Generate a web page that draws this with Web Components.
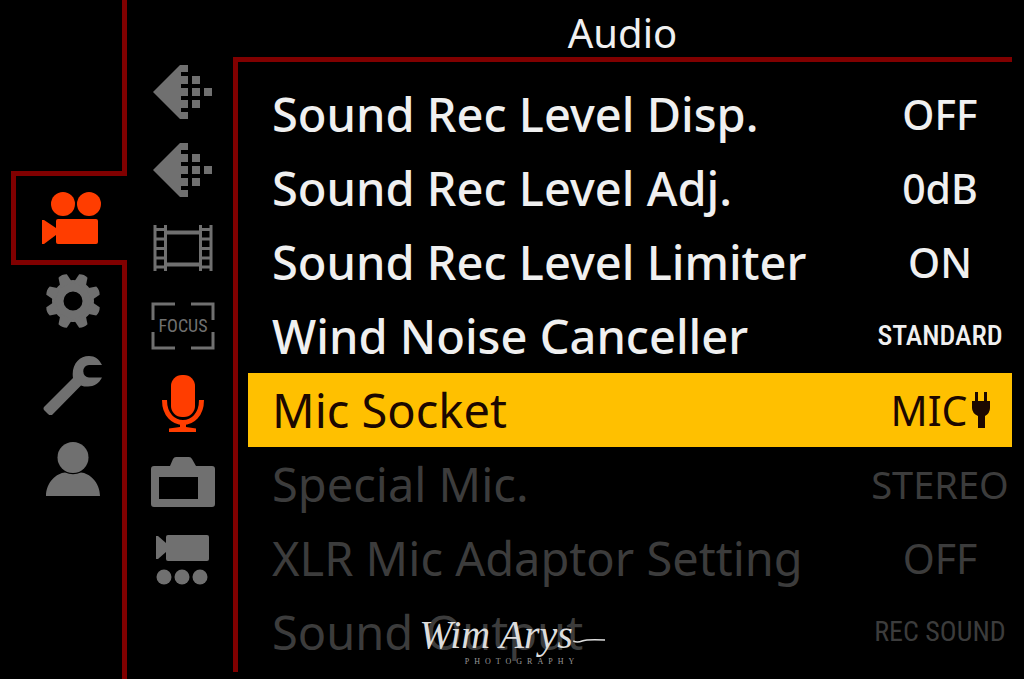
<!DOCTYPE html>
<html lang="en">
<head>
<meta charset="utf-8">
<title>Camera menu – Audio</title>
<meta name="viewport" content="width=device-width, initial-scale=1">
<style>
html { background: #000; }
body { margin: 0; background: #000; color: #f0f0f0; font-family: "Noto Sans", "Open Sans", sans-serif; --narrow: "Noto Sans Condensed", "Roboto Condensed", "Liberation Sans Narrow", "Noto Sans", sans-serif; }
</style>
</head>
<body>
<camera-menu></camera-menu>
<script>
const ICONS = {
  movie: [60, 54, '<circle cx="21" cy="13" r="12"/><circle cx="47" cy="13" r="12"/><rect x="14" y="28" width="42" height="25" rx="2"/><path d="M0 29h2l12 8v7L2 53H0z"/>'],
  gear: [56, 56, '<path fill-rule="evenodd" d="M28 7a21 21 0 1 0 0 42a21 21 0 1 0 0-42zM28 18.500a9.500 9.500 0 1 1 0 19a9.500 9.500 0 1 1 0-19z"/>' +
    [22.5, 67.5, 112.5, 157.5, 202.5, 247.5, 292.5, 337.5].map(a => `<path transform="rotate(${a} 28 28)" d="M21.500 11L23.500 1q4.500-2 9 0L34.500 11z"/>`).join('')],
  wrench: [60, 60, '<path d="M1 52L30 23C28 10 36 1 46 1c6 0 10 3 13 9H46a5.500 6 0 0 0 0 12.500h13c-3 6-8 9-14 9-3 0-5 0-7-1L9 60q-2 1-4-1l-4-4q-1-1.500 0-3z"/>'],
  person: [54, 54, '<circle cx="27" cy="15.500" r="15.500"/><path d="M0 54C0 40 11 31 19 30.500q8 3.500 16 0C43 31 54 40 54 54z"/>'],
  quality: [60, 56, '<path d="M0 28L27 1h8v7h-7v4h7v8h-7v4h7v8h-7v4h7v8h-7v4h7v7h-8z"/><path d="M39 12h8v8h-8zM39 24h8v8h-8zM39 36h8v8h-8zM51 24h8v8h-8z"/>'],
  film: [60, 46, '<path fill="none" stroke="currentColor" stroke-width="3" d="M2 0v46M12.500 0v46M47.500 0v46M58 0v46M2 4.500h11M2 14h11M2 23.500h11M2 33h11M2 42h11M47 4.500h11M47 14h11M47 23.500h11M47 33h11M47 42h11"/><path fill="none" stroke="currentColor" stroke-width="4" d="M13 7.500h34M13 39.500h34"/>'],
  mic: [44, 58, '<rect x="10" y="0" width="24" height="42" rx="11"/><path fill="none" stroke="currentColor" stroke-width="5" d="M3.500 25c0 30 37 30 37 0"/><path d="M19 46h6v6l10 1.500V57H8v-3.500l11-1.500z"/>'],
  camera: [64, 50, '<path fill-rule="evenodd" d="M3 9H19L22 2q1-2 3-2H38q2 0 3 2L45 9H61q3 0 3 3V47q0 3-3 3H3q-3 0-3-3V12q0-3 3-3zM8 20V42H47V20z"/>'],
  clips: [54, 50, '<rect x="10" y="0" width="43" height="26" rx="2"/><path d="M0 1h2l8 7v9l-8 7H0z"/><circle cx="8" cy="42" r="7.500"/><circle cx="26" cy="42" r="7.500"/><circle cx="44" cy="42" r="7.500"/>'],
  plug: [18, 36, '<path d="M3 0h3v9h6V0h3v9h3v7q0 5-5 8v12H6V24q-6-3-6-8V9h3z"/>']
};

class MenuIcon extends HTMLElement {
  constructor() {
    super();
    const [w, h, body] = ICONS[this.getAttribute('name')];
    this.attachShadow({ mode: 'open' }).innerHTML = `
      <style>:host{display:inline-block;line-height:0}svg{display:block;fill:currentColor}</style>
      <svg width="${w}" height="${h}" viewBox="0 0 ${w} ${h}" aria-hidden="true">${body}</svg>`;
  }
}
customElements.define('menu-icon', MenuIcon);

class FocusFrame extends HTMLElement {
  constructor() {
    super();
    this.attachShadow({ mode: 'open' }).innerHTML = `
      <style>
        :host{display:grid;width:64px;height:48px}
        svg,span{grid-area:1/1}
        span{place-self:center;font:18px/24px var(--narrow)}
      </style>
      <svg width="64" height="48" viewBox="0 0 64 48" fill="none" stroke="currentColor" stroke-width="3" aria-hidden="true">
        <path d="M24 2H2V18M40 2H62V18M2 30V46H24M62 30V46H40"/></svg>
      <span><slot></slot></span>`;
  }
}
customElements.define('focus-frame', FocusFrame);

class MenuTab extends HTMLElement {
  constructor() {
    super();
    this.attachShadow({ mode: 'open' }).innerHTML = `
      <style>
        :host{display:grid;color:#707070}
        :host([active]){color:#ff3d00}
        button{display:grid;place-items:center;margin:0;padding:0;border:0;background:none;color:inherit;font:inherit;cursor:pointer}
      </style>
      <button type="button" aria-label="${this.getAttribute('label')}"><slot></slot></button>`;
  }
}
customElements.define('menu-tab', MenuTab);

class SettingRow extends HTMLElement {
  constructor() {
    super();
    const off = this.hasAttribute('disabled') ? 'disabled' : '';
    this.attachShadow({ mode: 'open' }).innerHTML = `
      <style>
        :host{display:block;color:#f0f0f0;font-weight:500}
        :host([disabled]){color:#3c3c3c;font-weight:400}
        :host([selected]){color:#1c0800;background:#ffc000;font-weight:400}
        button{display:grid;grid-template-columns:1fr 144px;align-items:center;width:100%;height:74px;margin:0;padding:0 0 0 24px;
          border:0;background:none;color:inherit;font-family:"Noto Sans",sans-serif;font-size:47px;line-height:64px;font-weight:inherit;text-align:left;white-space:nowrap;cursor:pointer}
        .value{display:flex;justify-content:center;align-items:center;gap:4px;font-size:41px}
        :host([size="wide"]) .value{font-size:38px}
        :host([size="narrow"]) .value{font-family:var(--narrow);font-size:28px}
      </style>
      <button type="button" ${off}><span><slot></slot></span><span class="value"><slot name="value"></slot></span></button>`;
  }
}
customElements.define('setting-row', SettingRow);

class PhotoCredit extends HTMLElement {
  constructor() {
    super();
    this.attachShadow({ mode: 'open' }).innerHTML = `
      <style>
        :host{display:grid;justify-items:center;color:#ddd;white-space:nowrap}
        .name{display:flex;align-items:center;font:italic 40px/44px "Liberation Serif",serif}
        svg{display:block;flex:none;fill:none;stroke:currentColor}
        .role{padding-left:20px;font:8px/10px "Liberation Serif",serif;letter-spacing:5px;color:#999}
      </style>
      <span class="name"><slot></slot><svg width="32" height="20" viewBox="0 0 32 20" aria-hidden="true"><path stroke-width="1.5" d="M0 16Q4 18 9 16T32 15"/></svg></span>
      <span class="role"><slot name="role"></slot></span>`;
  }
}
customElements.define('photo-credit', PhotoCredit);

class CameraMenu extends HTMLElement {
  constructor() {
    super();
    this.attachShadow({ mode: 'open' }).innerHTML = `
      <style>
        :host{--line:5px solid #800000;display:grid;grid-template-columns:127px 106px minmax(0,1fr);position:relative;height:100vh;overflow:hidden}
        .main{display:flex;flex-direction:column}
        .space{height:171px;box-sizing:border-box;border-right:var(--line);flex:none}
        .main menu-tab[active]{height:94px;box-sizing:border-box;flex:none;margin-left:11px;border:var(--line);border-right:0}
        .rest{flex:1;display:grid;align-content:start;grid-auto-rows:72px;gap:12px;padding-left:23px;border-right:var(--line)}
        .sub{display:grid;align-content:start;grid-auto-rows:78px;padding:53px 0 0 6px}
        .panel{display:flex;flex-direction:column;padding:0 12px 7px 0}
        h1{box-sizing:border-box;margin:0;height:57px;padding-top:8px;display:grid;place-items:center;font:40px/44px "Noto Sans",sans-serif}
        .list{flex:1;border-top:var(--line);border-left:var(--line);padding:15px 0 0 10px;min-height:0}
        photo-credit{position:absolute;left:50%;bottom:12px;transform:translateX(-50%)}
      </style>
      <nav class="main" aria-label="Menus">
        <div class="space"></div>
        <menu-tab active label="Video"><menu-icon name="movie"></menu-icon></menu-tab>
        <div class="rest">
          <menu-tab label="Custom"><menu-icon name="gear"></menu-icon></menu-tab>
          <menu-tab label="Setup"><menu-icon name="wrench"></menu-icon></menu-tab>
          <menu-tab label="My Menu"><menu-icon name="person"></menu-icon></menu-tab>
        </div>
      </nav>
      <nav class="sub" aria-label="Video pages">
        <menu-tab label="Image Quality 1"><menu-icon name="quality"></menu-icon></menu-tab>
        <menu-tab label="Image Quality 2"><menu-icon name="quality"></menu-icon></menu-tab>
        <menu-tab label="Image Format"><menu-icon name="film"></menu-icon></menu-tab>
        <menu-tab label="Focus"><focus-frame>FOCUS</focus-frame></menu-tab>
        <menu-tab active label="Audio"><menu-icon name="mic"></menu-icon></menu-tab>
        <menu-tab label="Others"><menu-icon name="camera"></menu-icon></menu-tab>
        <menu-tab label="Monitor"><menu-icon name="clips"></menu-icon></menu-tab>
      </nav>
      <main class="panel">
        <h1>Audio</h1>
        <div class="list">
          <setting-row>Sound Rec Level Disp.<span slot="value">OFF</span></setting-row>
          <setting-row>Sound Rec Level Adj.<span slot="value">0dB</span></setting-row>
          <setting-row>Sound Rec Level Limiter<span slot="value">ON</span></setting-row>
          <setting-row size="narrow">Wind Noise Canceller<span slot="value">STANDARD</span></setting-row>
          <setting-row selected>Mic Socket<span slot="value">MIC</span><menu-icon slot="value" name="plug"></menu-icon></setting-row>
          <setting-row size="wide" disabled>Special Mic.<span slot="value">STEREO</span></setting-row>
          <setting-row disabled>XLR Mic Adaptor Setting<span slot="value">OFF</span></setting-row>
          <setting-row size="narrow" disabled>Sound Output<span slot="value">REC SOUND</span></setting-row>
        </div>
      </main>
      <photo-credit>Wim Arys<span slot="role">PHOTOGRAPHY</span></photo-credit>`;
  }
}
customElements.define('camera-menu', CameraMenu);
</script>
</body>
</html>
